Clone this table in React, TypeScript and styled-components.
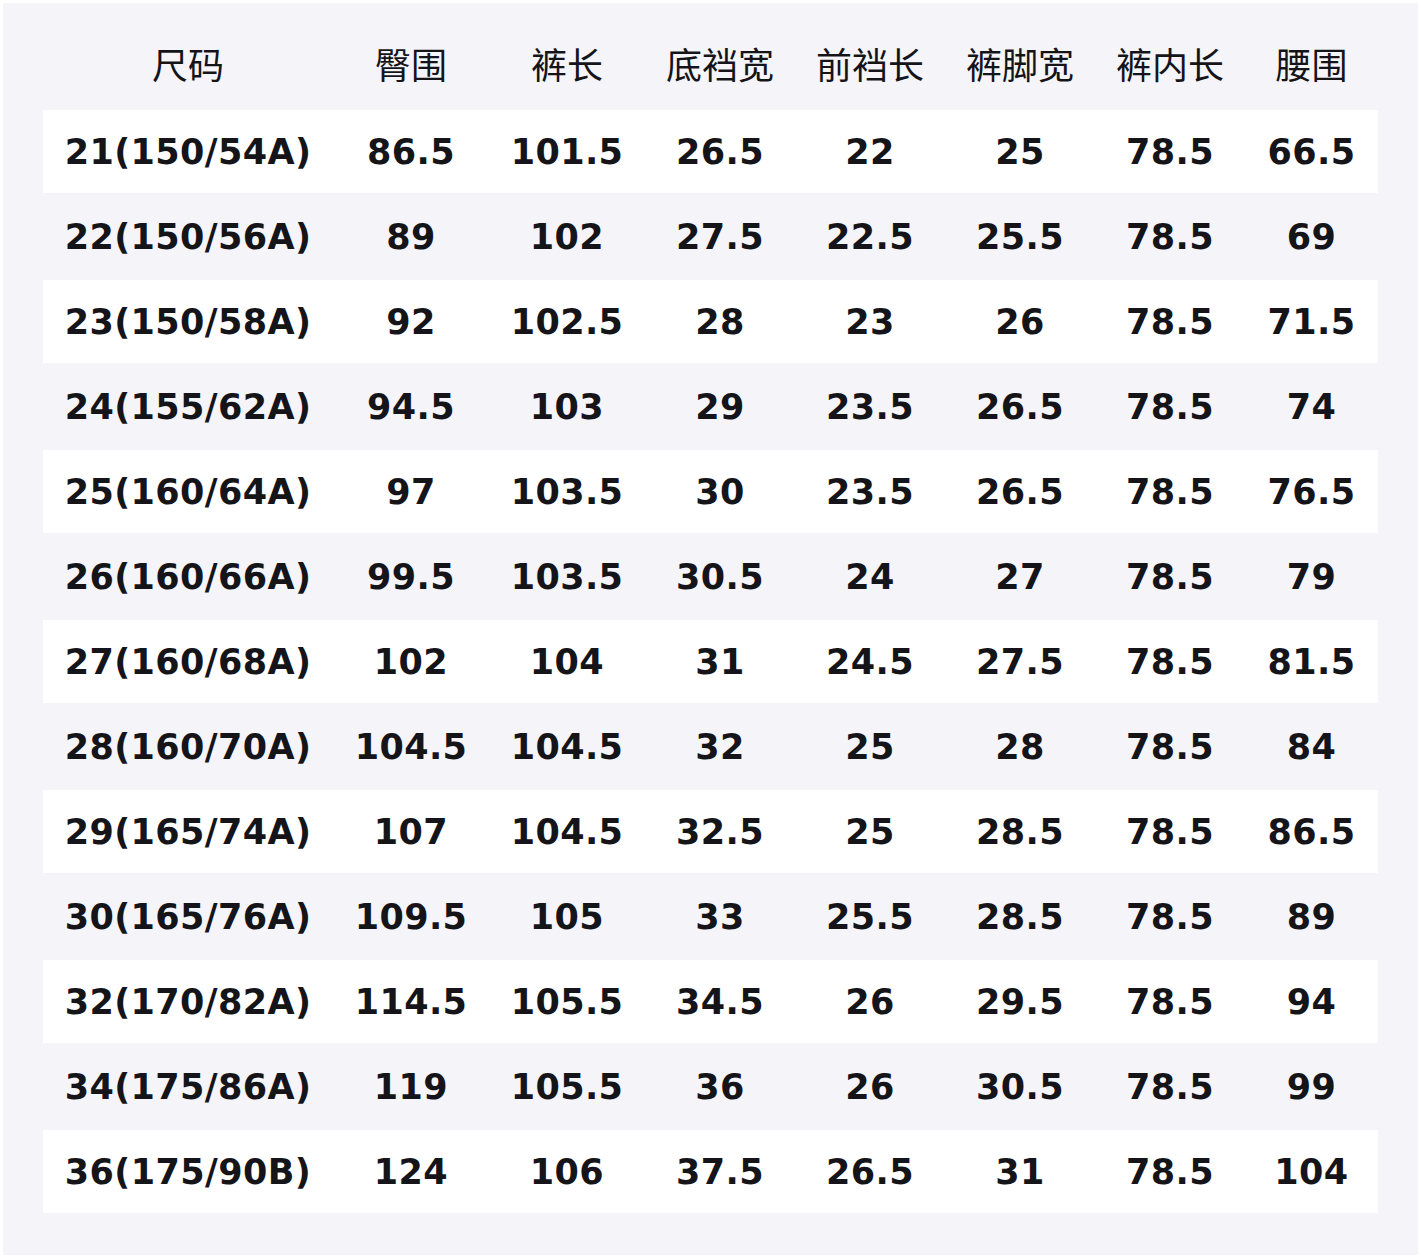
import styled, { createGlobalStyle } from 'styled-components';

const GlobalStyle = createGlobalStyle`
  html, body {
    margin: 0;
    padding: 0;
    background: #ffffff;
  }
  body {
    font-family: 'DejaVu Sans', 'Noto Sans CJK SC', sans-serif;
    color: #141419;
  }
`;

const headers = ['尺码', '臀围', '裤长', '底裆宽', '前裆长', '裤脚宽', '裤内长', '腰围'];

const rows: string[][] = [
  ['21(150/54A)', '86.5', '101.5', '26.5', '22', '25', '78.5', '66.5'],
  ['22(150/56A)', '89', '102', '27.5', '22.5', '25.5', '78.5', '69'],
  ['23(150/58A)', '92', '102.5', '28', '23', '26', '78.5', '71.5'],
  ['24(155/62A)', '94.5', '103', '29', '23.5', '26.5', '78.5', '74'],
  ['25(160/64A)', '97', '103.5', '30', '23.5', '26.5', '78.5', '76.5'],
  ['26(160/66A)', '99.5', '103.5', '30.5', '24', '27', '78.5', '79'],
  ['27(160/68A)', '102', '104', '31', '24.5', '27.5', '78.5', '81.5'],
  ['28(160/70A)', '104.5', '104.5', '32', '25', '28', '78.5', '84'],
  ['29(165/74A)', '107', '104.5', '32.5', '25', '28.5', '78.5', '86.5'],
  ['30(165/76A)', '109.5', '105', '33', '25.5', '28.5', '78.5', '89'],
  ['32(170/82A)', '114.5', '105.5', '34.5', '26', '29.5', '78.5', '94'],
  ['34(175/86A)', '119', '105.5', '36', '26', '30.5', '78.5', '99'],
  ['36(175/90B)', '124', '106', '37.5', '26.5', '31', '78.5', '104'],
];

function App() {
  return (
    <>
      <GlobalStyle />
      <StyledSheet>
        <StyledTable>
          <StyledRow $header>
            {headers.map((h) => (
              <StyledCell key={h} $header>
                {h}
              </StyledCell>
            ))}
          </StyledRow>
          {rows.map((row, i) => (
            <StyledRow key={row[0]} $striped={i % 2 === 0}>
              {row.map((value, j) => (
                <StyledCell key={j}>{value}</StyledCell>
              ))}
            </StyledRow>
          ))}
        </StyledTable>
      </StyledSheet>
    </>
  );
}

export default App;

const StyledSheet = styled.div`
  margin: 3px;
  width: 1415px;
  height: 1252px;
  box-sizing: border-box;
  padding: 20px 40px 42px;
  background-color: #f4f4f9;
`;

const StyledTable = styled.div`
  display: flex;
  flex-direction: column;
  gap: 2px;
`;

const StyledRow = styled.div<{ $header?: boolean; $striped?: boolean }>`
  display: grid;
  grid-template-columns: 290px 156px 156px 150px 150px 150px 150px 1fr;
  box-sizing: border-box;
  height: ${({ $header }) => ($header ? '85px' : '83px')};
  padding-bottom: ${({ $header }) => ($header ? '5px' : '0')};
  background-color: ${({ $striped }) => ($striped ? '#ffffff' : 'transparent')};
`;

const StyledCell = styled.div<{ $header?: boolean }>`
  display: flex;
  align-items: center;
  justify-content: center;
  white-space: nowrap;
  font-size: ${({ $header }) => ($header ? '36px' : '35px')};
  font-weight: ${({ $header }) => ($header ? 400 : 700)};
  letter-spacing: ${({ $header }) => ($header ? '0' : '0.4px')};
`;
